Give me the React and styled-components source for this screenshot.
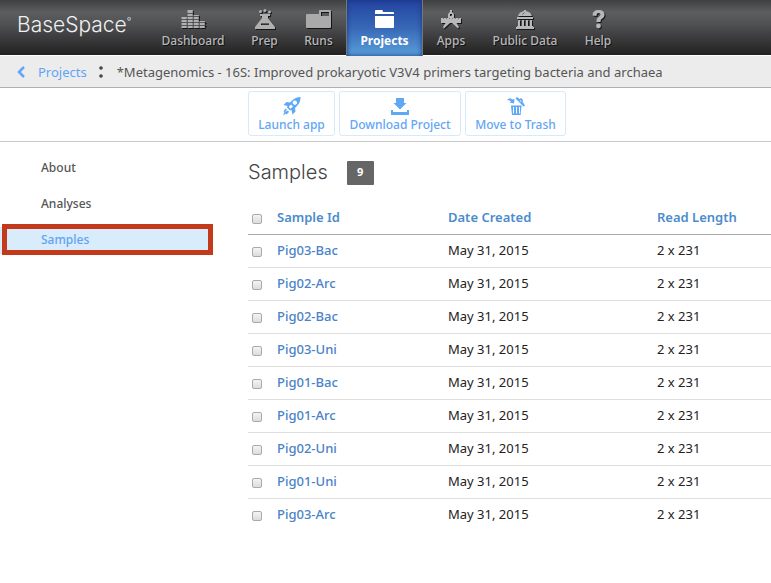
import React from "react";
import styled, { createGlobalStyle, css } from "styled-components";

const GlobalStyle = createGlobalStyle`
  * { box-sizing: border-box; }
  body {
    margin: 0;
    background: #fff;
    color: #333;
    font: 12px/18px "Noto Sans", "Open Sans", sans-serif;
    overflow-x: hidden;
  }
  a { text-decoration: none; color: inherit; }
`;

const Header = styled.header`
  display: flex;
  height: 55px;
  background: linear-gradient(#3f4042 0, #5c5d5f 12px, #505153 24px, #2a292a 50px, #232122 55px);
`;

const Logo = styled.a`
  width: 148px;
  padding: 11px 0 0 17px;
  font: 300 21px/28px Inter, "Liberation Sans", sans-serif;
  color: #f0f0f0;
  white-space: nowrap;
  sup { font-size: 10px; line-height: 8px; vertical-align: 7px; }
`;

const Nav = styled.nav`
  display: flex;
`;

const NavItem = styled.a`
  display: flex;
  flex-direction: column;
  align-items: center;
  width: ${(p) => p.$width}px;
  padding-top: 9px;
  color: #b8b8b8;
  font-weight: 500;
  white-space: nowrap;
  text-shadow: 1px 1px 0 #111;
  svg { display: block; height: 20px; margin-bottom: 3px; filter: drop-shadow(1px 1px 0 #151515); }
  ${(p) => p.$active && css`
    height: 56px;
    color: #fff;
    font-weight: 700;
    text-shadow: none;
    background: linear-gradient(#2443a0, #3768b7 50%, #5b9fda);
    box-shadow: inset 0 0 5px #173780;
    border: solid #777;
    border-width: 0 1px;
    svg { filter: none; }
  `}
`;

const Breadcrumb = styled.nav`
  display: flex;
  align-items: center;
  height: 32px;
  margin-top: 1px;
  padding-left: 17px;
  background: #ececec;
  border-bottom: 1px solid #b0b0b0;
  color: #555;
  font-size: 13px;
  white-space: nowrap;
  a { display: flex; align-items: center; gap: 13px; color: #5fa5f8; }
  svg { display: block; }
`;

const Dots = styled.svg`
  margin: 0 14px 0 12px;
`;

const Toolbar = styled.div`
  display: flex;
  gap: 4px;
  padding: 3px 0 5px 248px;
  border-bottom: 1px solid #c8c8c8;
`;

const ToolButton = styled.button`
  display: flex;
  flex-direction: column;
  align-items: center;
  width: ${(p) => p.$width}px;
  height: 45px;
  padding: 5px 0 0;
  border: 1px solid #d5eafa;
  border-radius: 3px;
  background: #fff;
  color: #62a6f5;
  font: inherit;
  font-weight: 500;
  white-space: nowrap;
  cursor: pointer;
  svg { display: block; height: 19px; }
`;

const Body = styled.div`
  display: grid;
  grid-template-columns: 213px minmax(0, 1fr);
  column-gap: 35px;
`;

const Sidebar = styled.nav`
  display: flex;
  flex-direction: column;
  gap: 9px;
  padding-top: 13px;
`;

const SideLink = styled.a`
  position: relative;
  height: 27px;
  padding-left: 41px;
  line-height: 26px;
  font-weight: 500;
  color: ${(p) => (p.$active ? "#62a2f0" : "#555")};
  background: ${(p) => (p.$active ? "#d8ecfc" : "transparent")};
`;

const Highlight = styled.span`
  position: absolute;
  inset: -3px 0 -1px 2px;
  border: 5px solid #c2391b;
`;

const Content = styled.main`
  padding-top: 19px;
`;

const Heading = styled.div`
  display: flex;
  align-items: center;
  gap: 19px;
  height: 24px;
  margin-bottom: 16px;
  h1 {
    margin: 0;
    font: 300 20px/22px Inter, "Liberation Sans", sans-serif;
    height: 24px;
    color: #444;
  }
`;

const Count = styled.span`
  width: 27px;
  height: 24px;
  border-radius: 1px;
  background: #666;
  color: #fff;
  font-size: 11px;
  font-weight: 700;
  line-height: 22px;
  text-align: center;
`;

const Table = styled.table`
  width: 100%;
  border-collapse: collapse;
  table-layout: fixed;
  font-size: 13px;
  th, td { height: 33px; padding: 0; text-align: left; white-space: nowrap; }
  th { color: #4a8ccc; font-weight: 600; border-bottom: 1px solid #aaa; }
  td { color: #222; border-bottom: 1px solid #ddd; }
  td:not(:first-child) { padding-bottom: 2px; }
  tr:last-child td { border-bottom: 0; }
  td a { color: #4a82c8; font-weight: 500; }
`;

const Col = styled.col`
  width: ${(p) => (p.$width ? `${p.$width}px` : "auto")};
`;

const Check = styled.input`
  appearance: none;
  display: block;
  width: 10px;
  height: 10px;
  margin: 3px 0 0 4px;
  border: 1px solid #aaa;
  border-radius: 2px;
  background: linear-gradient(#f4f4f4, #dcdcdc);
  &:checked { background: #4a8ccc; }
`;

const icons = {
  dashboard: (
    <svg width="25" height="20" viewBox="0 0 25 20" fill="#b0b0b0">
      {[[0, 11], [6, 18], [12, 13], [18, 7]].map(([x, h]) => (
        <rect key={x} x={x + 0.5} y={19 - h} width="5.300" height={h} />
      ))}
      <path stroke="#444" strokeWidth=".8" d="M0 16.500h25M0 13.500h25M0 10.500h18M6 7.500h12M6 4.500h6" />
    </svg>
  ),
  prep: (
    <svg width="22" height="20" viewBox="0 0 22 20" fill="#b0b0b0">
      <circle cx="6.5" cy="2.500" r="1.500" /><circle cx="11" cy="1.500" r="1.500" /><circle cx="15.500" cy="3" r="1.500" />
      <path fillRule="evenodd" d="M6 5h10v2h-2v2l7 9v2H1v-2l7-9V7H6zM7 14.500v1.500h8v-1.500z" />
    </svg>
  ),
  runs: (
    <svg width="25" height="20" viewBox="0 0 25 20">
      <path fill="#aaa" fillRule="evenodd" d="M1 5h12V2q0-1 1-1h10q1 0 1 1v16q0 1-1 1H1q-1 0-1-1V6q0-1 1-1zm14-2v4h8V3z" />
    </svg>
  ),
  projects: (
    <svg width="19" height="20" viewBox="0 0 19 20" fill="#fff">
      <path d="M0 2q0-1 1-1h6q1 0 1 2h10q1 0 1 1v1H0zM0 7h19v11q0 1-1 1H1q-1 0-1-1z" />
    </svg>
  ),
  apps: (
    <svg width="22" height="20" viewBox="0 0 22 20" fill="#b8b8b8">
      <path fillRule="evenodd" d="M10 1h2v2q2 1 2 3v3h7v5h-4.500l2.500 4-1 1.500-6-5.500h-2l-6 5.500L3 18l2.500-4H1V9h7V6q0-2 2-3zm0 4v2h2V5z" />
      <path stroke="#777" d="M3.500 9v1m3-1v1m3-1v1m3-1v1m3-1v1m3-1v1" />
    </svg>
  ),
  data: (
    <svg width="18" height="20" viewBox="0 0 18 20" fill="#b8b8b8">
      <path d="M8 1h2v1q5 1 6 5H2q1-4 6-5zM1 8h16v2H1zm1 3h2v6H2zm4 0h2v6H6zm4 0h2v6h-2zm4 0h2v6h-2zM1 17h16v1h1v2H0v-2h1z" />
      <path d="M6 5.500l3-2" stroke="#777" />
    </svg>
  ),
  help: (
    <svg width="13" height="20" viewBox="0 0 13 20" fill="#b8b8b8">
      <path d="M.5 6.500Q.5 1 6.500 1 12.500 1 12.500 5.500q0 3-3 4.500Q8.500 10.800 8.500 13h-4v-1.500q0-2.500 2.300-3.700Q8.500 7 8.500 5.500q0-1.500-2-1.500t-2 3z" />
      <circle cx="6.500" cy="17" r="2.400" />
    </svg>
  ),
  rocket: (
    <svg width="19" height="19" viewBox="0 0 19 19" fill="#5fa8f5">
      <path fillRule="evenodd" d="M18.500 0q.5 5-4 9.500L13 11l.5 3.500-3 3L9.500 13l-1.500.5L5 10.500 5.500 9 1.500 8l3-3L8 5.500 9.500 4Q13.500 0 18.500 0zM12.800 3.500a2.200 2.200 0 1 0 .1 0zM9 7.500L6.700 10l1.800 1.800L11 9.500z" />
      <path d="M3.500 11.500l1.500 1-2 2.500 3-1.500 1 1.500-2.500 2.500-.5-1L1 18.500 2.500 15l-1-.5z" />
    </svg>
  ),
  download: (
    <svg width="18" height="19" viewBox="0 0 18 19" fill="#5fa8f5">
      <path d="M5 1h8v5h2.500L9 12.500 2.500 6H5zM0 13h2v2h14v-2h2v5H0z" />
    </svg>
  ),
  trash: (
    <svg width="18" height="19" viewBox="0 0 18 19" fill="#5fa8f5">
      <path d="M4 9h2v9H5zM7 9h2v9H7zM10 9h2v9h-2zM13 9h1.500l-1 9H13z" />
      <path d="M4 8.500h10.500v1.500H4zM5 16.500h8.500V18H5z" />
      <path d="M0 3q3-3 5-.5L7.500 2 7 6.500 2.500 5.500l1.500-1Q2.500 3 0 3z" />
      <path fillRule="evenodd" d="M8.500 1.500L10 0l2.500 2L14 1l2 2-.3 2 2.300 3.500-1.500 1zM12.500 3.500l1.500 1.500.5-.8-1-1z" />
    </svg>
  ),
};

const navItems = [
  ["Dashboard", "dashboard", 90],
  ["Prep", "prep", 53],
  ["Runs", "runs", 55],
  ["Projects", "projects", 77],
  ["Apps", "apps", 56],
  ["Public Data", "data", 92],
  ["Help", "help", 54],
];

const tools = [
  ["Launch app", "rocket", 87],
  ["Download Project", "download", 122],
  ["Move to Trash", "trash", 101],
];

const samples = [
  "Pig03-Bac", "Pig02-Arc", "Pig02-Bac", "Pig03-Uni", "Pig01-Bac",
  "Pig01-Arc", "Pig02-Uni", "Pig01-Uni", "Pig03-Arc",
];

export default function App() {
  return (
    <>
      <GlobalStyle />
      <Header>
        <Logo href="#home">BaseSpace<sup>°</sup></Logo>
        <Nav aria-label="Main">
          {navItems.map(([label, icon, width]) => (
            <NavItem key={label} href={`#${icon}`} $width={width} $active={label === "Projects"}>
              {icons[icon]}
              {label}
            </NavItem>
          ))}
        </Nav>
      </Header>
      <Breadcrumb aria-label="Breadcrumb">
        <a href="#projects">
          <svg width="8" height="12" viewBox="0 0 8 12" fill="none" stroke="#5fa5f8" strokeWidth="2.500">
            <path d="M7 1L2 6l5 5" />
          </svg>
          Projects
        </a>
        <Dots width="4" height="12" viewBox="0 0 4 12" fill="#444">
          <circle cx="2" cy="2" r="1.800" />
          <circle cx="2" cy="10" r="1.800" />
        </Dots>
        <span>*Metagenomics - 16S: Improved prokaryotic V3V4 primers targeting bacteria and archaea</span>
      </Breadcrumb>
      <Toolbar>
        {tools.map(([label, icon, width]) => (
          <ToolButton key={label} type="button" $width={width}>
            {icons[icon]}
            {label}
          </ToolButton>
        ))}
      </Toolbar>
      <Body>
        <Sidebar aria-label="Project">
          <SideLink href="#about">About</SideLink>
          <SideLink href="#analyses">Analyses</SideLink>
          <SideLink href="#samples" $active>Samples<Highlight /></SideLink>
        </Sidebar>
        <Content>
          <Heading>
            <h1>Samples</h1>
            <Count>{samples.length}</Count>
          </Heading>
          <Table>
            <colgroup><Col $width={29} /><Col $width={171} /><Col $width={209} /><Col /></colgroup>
            <thead>
              <tr>
                <th><Check type="checkbox" aria-label="Select all samples" /></th>
                <th>Sample Id</th>
                <th>Date Created</th>
                <th>Read Length</th>
              </tr>
            </thead>
            <tbody>
              {samples.map((name) => (
                <tr key={name}>
                  <td><Check type="checkbox" aria-label={`Select ${name}`} /></td>
                  <td><a href={`#${name}`}>{name}</a></td>
                  <td>May 31, 2015</td>
                  <td>2 x 231</td>
                </tr>
              ))}
            </tbody>
          </Table>
        </Content>
      </Body>
    </>
  );
}
